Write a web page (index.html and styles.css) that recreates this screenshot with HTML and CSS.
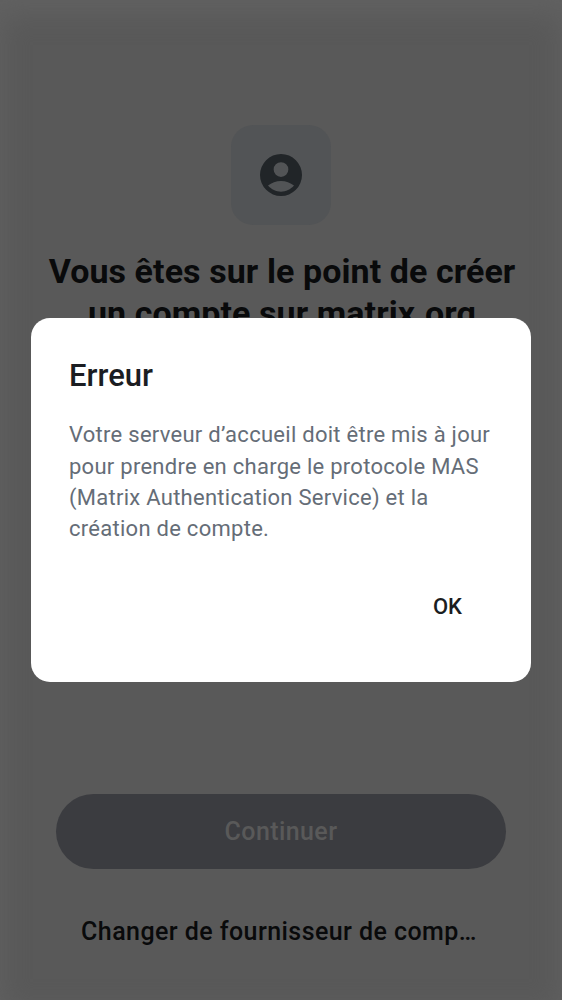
FILE: index.html
```html
<!DOCTYPE html>
<html lang="fr">
<head>
<meta charset="utf-8">
<title>Erreur</title>
<link rel="stylesheet" href="styles.css">
</head>
<body>
<main class="screen">
  <div class="badge">
    <svg class="avatar" viewBox="0 0 42 42"><path fill-rule="evenodd" d="M21 0a21 21 0 1 0 0 42 21 21 0 0 0 0-42zM21 8.200a7.350 7.350 0 1 1 0 14.700 7.350 7.350 0 0 1 0-14.700zM21 37.800c-4.900 0-9.600-2.300-13-6.200 3.600-3 8.100-4.700 13-4.700s9.400 1.700 13 4.700c-3.400 3.900-8.100 6.200-13 6.200z"/></svg>
  </div>
  <h1 class="title">Vous êtes sur le point de créer<br>un compte sur matrix.org</h1>
  <div class="actions">
    <div class="continue">Continuer</div>
    <div class="change">Changer de fournisseur de comp…</div>
  </div>
</main>
<section class="dialog">
  <h2 class="dialog-title">Erreur</h2>
  <p class="message">Votre serveur d’accueil doit être mis à jour<br>pour prendre en charge le protocole MAS<br>(Matrix Authentication Service) et la<br>création de compte.</p>
  <div class="buttons"><span class="ok">OK</span></div>
</section>
</body>
</html>
```
FILE: styles.css
```css
* { box-sizing: border-box; }
body { margin: 0; font-family: Roboto, sans-serif; }
h1, h2, p { margin: 0; }
.screen {
  height: 1000px;
  padding-top: 125px;
  display: flex;
  flex-direction: column;
  align-items: center;
  background: #595959;
  box-shadow: inset 0 12px 26px 2px #616161;
  overflow: hidden;
}
.badge {
  width: 100px;
  height: 100px;
  flex: none;
  border-radius: 22px;
  background: #525456;
  display: flex;
  align-items: center;
  justify-content: center;
}
.avatar { width: 42px; height: 42px; fill: #212528; }
.title {
  margin-top: 25px;
  padding-left: 2px;
  font-size: 34px;
  line-height: 42px;
  font-weight: 700;
  letter-spacing: .08px;
  text-align: center;
  white-space: nowrap;
  color: #090a0b;
}
.actions { margin-top: auto; padding-bottom: 48px; width: 450px; }
.continue {
  height: 75px;
  border-radius: 38px;
  background: #3b3c40;
  color: #595959;
  font-size: 25px;
  line-height: 75px;
  font-weight: 500;
  letter-spacing: .4px;
  text-align: center;
}
.change {
  margin-top: 42px;
  padding-right: 4px;
  font-size: 25px;
  line-height: 41px;
  font-weight: 500;
  letter-spacing: .43px;
  text-align: center;
  white-space: nowrap;
  color: #090a0b;
}
.dialog {
  position: absolute;
  left: 31px;
  top: 318px;
  width: 500px;
  height: 364px;
  padding: 38px 38px 36px;
  border-radius: 19px;
  background: #fff;
}
.dialog-title { font-size: 31px; line-height: 40px; font-weight: 500; color: #1b1d22; }
.message {
  margin-top: 23.3px;
  font-size: 22px;
  line-height: 31.25px;
  letter-spacing: .27px;
  white-space: nowrap;
  color: #656d77;
}
.buttons { margin-top: 47.7px; padding-right: 31px; text-align: right; }
.ok { font-size: 22px; line-height: 30px; font-weight: 500; color: #1b1d22; }
```
